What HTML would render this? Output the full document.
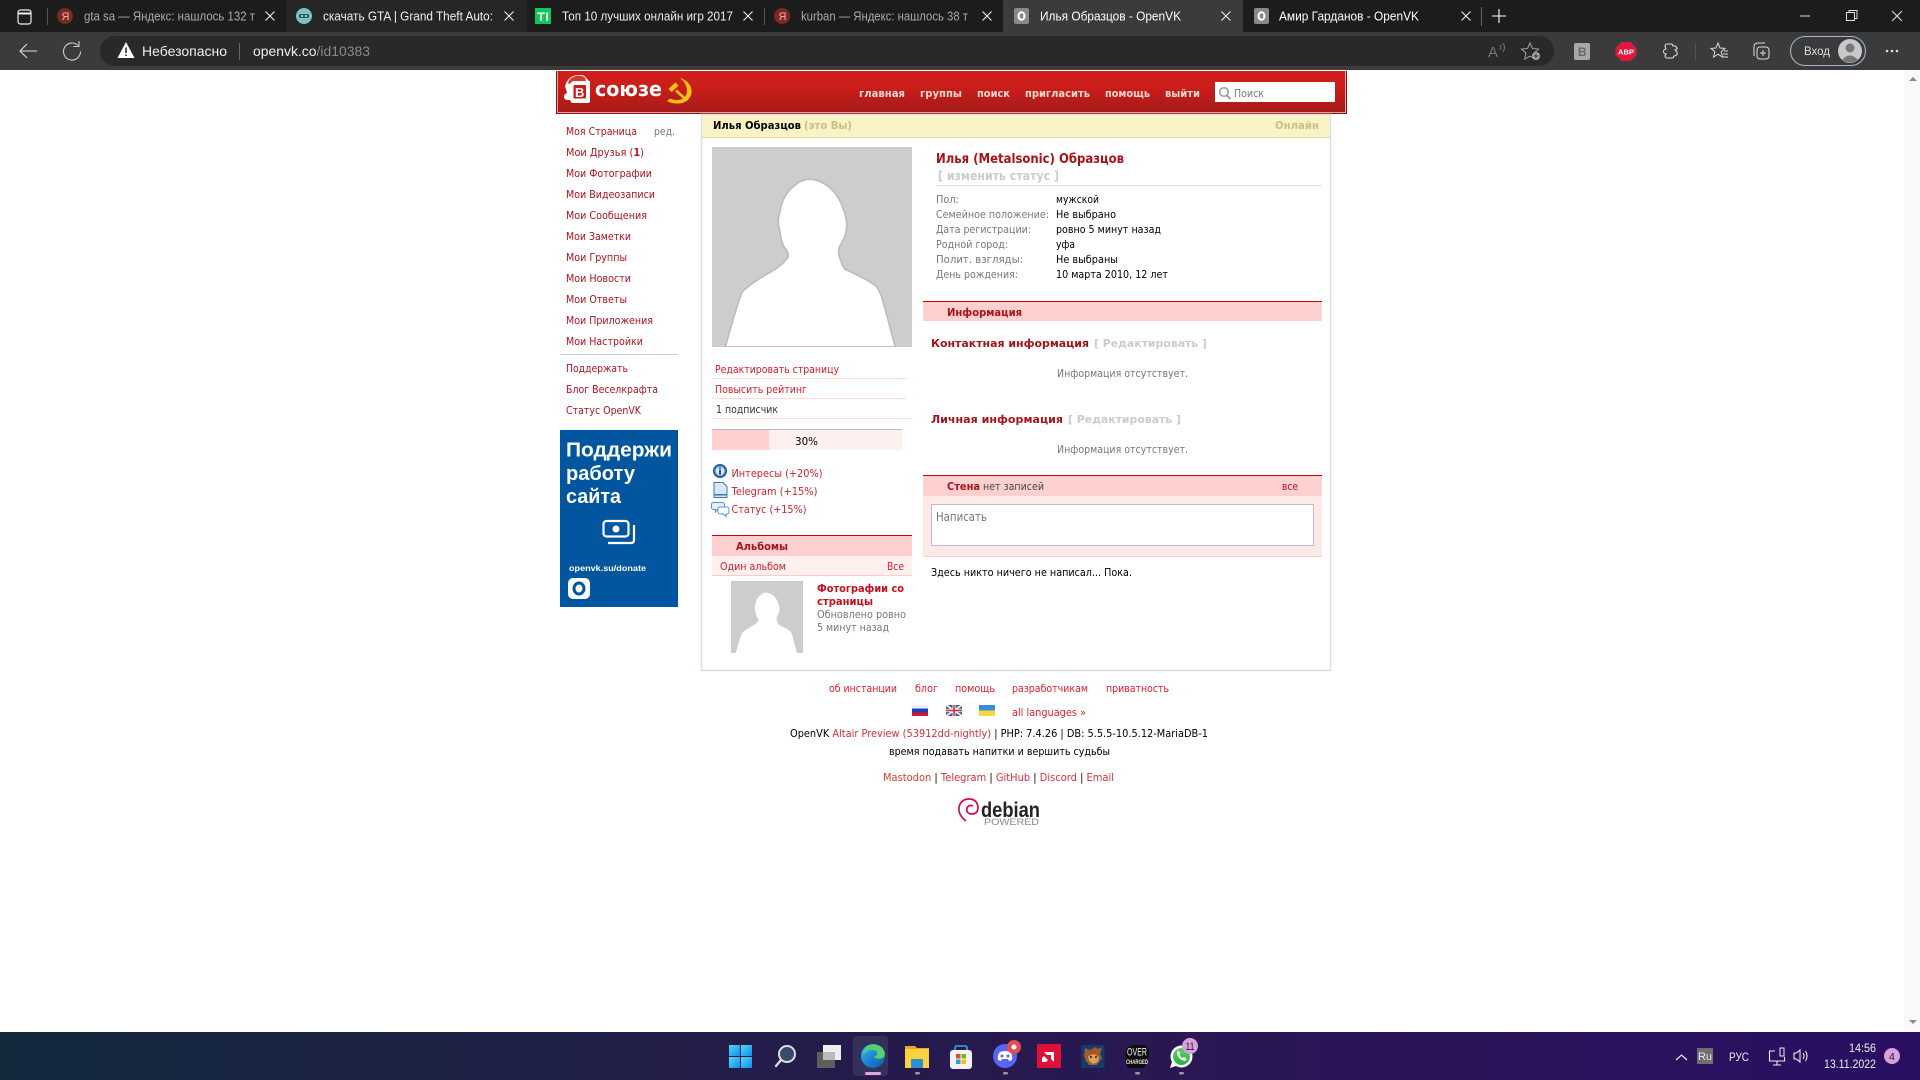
<!DOCTYPE html>
<html lang="ru"><head><meta charset="utf-8"><title>Илья Образцов - OpenVK</title>
<style>
html,body{margin:0;padding:0;width:1920px;height:1080px;overflow:hidden;background:#fff}
svg{display:block;position:absolute;left:0;top:0}
text{font-family:"DejaVu Sans",sans-serif;font-size:11px;white-space:pre}
.c text,text.c{font-family:"Liberation Sans",sans-serif}
.b{font-weight:bold}
.l{fill:#ad1420}.r{fill:#d3202c}.f{fill:#e0202c}.g{fill:#777}.k{fill:#000}.h{fill:#a8131a}.e{fill:#ccc}
.w{fill:#fff}
.t{font-size:12.5px;fill:#eee}
.n{fill:#f5d8d0;font-weight:bold}
</style></head><body>
<svg width="1920" height="1080" viewBox="0 0 1920 1080" xmlns="http://www.w3.org/2000/svg">
<defs>
<linearGradient id="hd" x1="0" y1="0" x2="0" y2="1"><stop offset="0" stop-color="#d21f1b"/><stop offset=".45" stop-color="#c91d1a"/><stop offset="1" stop-color="#a51a18"/></linearGradient>
<linearGradient id="tb" x1="0" y1="0" x2="1" y2="0"><stop offset="0" stop-color="#12293c"/><stop offset=".4" stop-color="#241c4a"/><stop offset=".7" stop-color="#2c1556"/><stop offset="1" stop-color="#2a0f63"/></linearGradient>
<linearGradient id="ed" x1="0" y1="0" x2="1" y2="1"><stop offset="0" stop-color="#35c1f1"/><stop offset=".55" stop-color="#1b7fd0"/><stop offset="1" stop-color="#0c59a4"/></linearGradient>
<linearGradient id="win" x1="0" y1="0" x2="1" y2="1"><stop offset="0" stop-color="#52d5fb"/><stop offset="1" stop-color="#0c8fe8"/></linearGradient>
<linearGradient id="wa" x1="0" y1="0" x2="0" y2="1"><stop offset="0" stop-color="#5bd066"/><stop offset="1" stop-color="#27b43e"/></linearGradient>
<path id="sil" d="M40 600C55 545 70 490 85 450C88 435 95 430 105 422C125 405 150 390 170 378C190 368 215 350 228 330C230 318 226 310 218 302C208 285 205 265 202 245C196 225 198 210 204 195C208 165 222 135 245 118C262 102 278 97 295 97C320 98 345 112 362 130C385 155 398 190 404 225C406 250 398 275 385 295C376 310 380 330 388 345C392 358 396 365 402 368C430 382 470 398 495 420C505 435 510 450 515 470L550 600Z"/>
</defs>

<!-- browser chrome -->
<rect width="1920" height="32" fill="#1c1c1c"/>
<rect x="286" y="0" width="241" height="32" fill="#262626"/>
<path d="M1003 32V0h240v32z" fill="#3b3b3b"/>
<rect y="32" width="1920" height="38" fill="#3b3b3b"/>
<rect x="100" y="36" width="1454" height="30" rx="15" fill="#292929"/>
<!-- tab strip -->
<g fill="none" stroke="#eee" stroke-width="1.2">
<rect x="18" y="10" width="13" height="14" rx="2.500"/><path d="M18 13.500h13" stroke-width="2"/>
</g>
<rect x="47" y="8" width="1" height="17" fill="#555"/>
<circle cx="65" cy="16" r="8" fill="#7c2a1e"/><text x="61.500" y="20" style="font-size:11px;fill:#e8b9b0" class="c">Я</text>
<text class="c t" x="84" y="20.500" textLength="171" lengthAdjust="spacingAndGlyphs" style="font-family:'Liberation Sans';fill:#aaa">gta sa — Яндекс: нашлось 132 т</text>
<path d="M265.500 11.500l9 9m0-9l-9 9" stroke="#eee" fill="none" stroke-width="1.100"/>
<circle cx="304" cy="16" r="8" fill="#7fc4b8"/><path d="M299 14h10v4h-10z" fill="#2d5a72"/><circle cx="302" cy="16" r="1" fill="#cde"/><circle cx="306" cy="16" r="1" fill="#cde"/>
<text class="c t" x="323" y="20.500" textLength="170" lengthAdjust="spacingAndGlyphs" style="font-family:'Liberation Sans'">скачать GTA | Grand Theft Auto:</text>
<path d="M504.500 11.500l9 9m0-9l-9 9" stroke="#eee" fill="none" stroke-width="1.100"/>
<rect x="535" y="8" width="16" height="16" fill="#12c75a"/><text x="537" y="21" style="font-size:12px;fill:#eafff0;font-family:'Liberation Sans';font-weight:bold" textLength="12" lengthAdjust="spacingAndGlyphs">TI</text>
<text class="c t" x="562" y="20.500" textLength="171" lengthAdjust="spacingAndGlyphs" style="font-family:'Liberation Sans'">Топ 10 лучших онлайн игр 2017</text>
<path d="M743.500 11.500l9 9m0-9l-9 9" stroke="#eee" fill="none" stroke-width="1.100"/>
<rect x="764" y="8" width="1" height="17" fill="#555"/>
<circle cx="782" cy="16" r="8" fill="#7c2a1e"/><text x="778.500" y="20" style="font-size:11px;fill:#e8b9b0" class="c">Я</text>
<text class="c t" x="801" y="20.500" textLength="167" lengthAdjust="spacingAndGlyphs" style="font-family:'Liberation Sans';fill:#aaa">kurban — Яндекс: нашлось 38 т</text>
<path d="M982.500 11.500l9 9m0-9l-9 9" stroke="#eee" fill="none" stroke-width="1.100"/>
<rect x="1014" y="8" width="15" height="16" rx="2" fill="#8a8a8a"/><ellipse cx="1021.500" cy="16" rx="3" ry="3.800" fill="none" stroke="#fff" stroke-width="2"/>
<text class="c t" x="1040" y="20.500" textLength="141" lengthAdjust="spacingAndGlyphs" style="font-family:'Liberation Sans';fill:#fff">Илья Образцов - OpenVK</text>
<path d="M1221.500 11.500l9 9m0-9l-9 9" stroke="#eee" fill="none" stroke-width="1.100"/>
<rect x="1254" y="8" width="15" height="16" rx="2" fill="#8a8a8a"/><ellipse cx="1261.500" cy="16" rx="3" ry="3.800" fill="none" stroke="#fff" stroke-width="2"/>
<text class="c t" x="1279" y="20.500" textLength="140" lengthAdjust="spacingAndGlyphs" style="font-family:'Liberation Sans';fill:#fff">Амир Гарданов - OpenVK</text>
<path d="M1461.500 11.500l9 9m0-9l-9 9" stroke="#eee" fill="none" stroke-width="1.100"/>
<rect x="1481" y="7" width="1" height="19" fill="#666"/>
<path d="M1492 16h14M1499 9v14" stroke="#fff" stroke-width="1.100"/>
<path d="M1800 16h10" stroke="#ddd"/>
<path d="M1846.500 12.500h8v8h-8z M1849 12.500v-2h8v8h-2" fill="none" stroke="#ddd"/>
<path d="M1892 11l10 10m0-10l-10 10" stroke="#ddd" fill="none" stroke-width="1.100"/>
<!-- toolbar -->
<path d="M37 51H20m7-7l-7 7 7 7" fill="none" stroke="#ddd" stroke-width="1.100"/>
<path d="M78 45.500a8.500 8.500 0 1 0 2.500 6M79 41v5.500h-5.500" fill="none" stroke="#ccc" stroke-width="1.100"/>
<path d="M126 42l8.500 16h-17z" fill="#fff"/><path d="M126 47.500v5.500M126 54.500v1.500" stroke="#222" stroke-width="1.500"/>
<text class="c" x="142" y="56" style="font-family:'Liberation Sans';font-size:13.500px;fill:#eee" textLength="85" lengthAdjust="spacingAndGlyphs">Небезопасно</text>
<rect x="239" y="43" width="1" height="17" fill="#666"/>
<text class="c" x="253" y="56" style="font-family:'Liberation Sans';font-size:13.500px;fill:#eee" textLength="117" lengthAdjust="spacingAndGlyphs">openvk.co<tspan fill="#8a8a8a">/id10383</tspan></text>
<text class="c" x="1488" y="57" style="font-family:'Liberation Sans';font-size:15px;fill:#777">A</text>
<path d="M1500 45q2 2 0 5M1503 43q3 4 0 9" stroke="#777" fill="none"/>
<path d="M1530 43l2.500 5.500 6 .6-4.500 4 1.300 6-5.300-3-5.300 3 1.300-6-4.500-4 6-.6z" fill="none" stroke="#999" stroke-width="1.100"/><circle cx="1536" cy="56" r="4" fill="#aaa"/><path d="M1533.500 56h5M1536 53.500v5" stroke="#333"/>
<rect x="1574" y="43" width="16" height="17" rx="2" fill="#a8a8a8"/><text x="1578" y="56" style="font-size:12px;fill:#666;font-weight:bold" class="c">B</text>
<path d="M1621.500 42h9l6 6v7l-6 6h-9l-6-6v-7z" fill="#e0183c"/><text x="1618" y="54.500" style="font-family:'Liberation Sans';font-size:7px;font-weight:bold;fill:#fff" textLength="16" lengthAdjust="spacingAndGlyphs">ABP</text>
<path d="M1667 44h5l1 2a3 3 0 0 1 4 3l-2 1 2 2a3 3 0 0 1-3 4l-1 2h-6a2 2 0 0 1-2-2l1-2a2.500 2.500 0 0 1 0-5l-1-3a2 2 0 0 1 2-2z" fill="none" stroke="#ddd" stroke-width="1.100"/>
<rect x="1695" y="43" width="1" height="17" fill="#555"/>
<path d="M1718 43l2 5 5 .4-3.800 3.400 1.300 5.200-4.500-2.800-4.500 2.800 1.300-5.200-3.800-3.400 5-.4z" fill="none" stroke="#ddd" stroke-width="1"/><path d="M1724 51h4M1723 54h5M1723 57h5" stroke="#ddd"/>
<rect x="1757" y="47" width="12" height="12" rx="3" fill="none" stroke="#ddd" stroke-width="1"/><path d="M1754 56V47q0-4 4-4h7M1763 50v6M1760 53h6" stroke="#ddd" fill="none" stroke-width="1"/>
<rect x="1790.500" y="36.500" width="75" height="29" rx="14.500" fill="none" stroke="#9fb7d0" stroke-width="1.100"/>
<text class="c" x="1804" y="55" style="font-family:'Liberation Sans';font-size:11.500px;fill:#ddd" textLength="26" lengthAdjust="spacingAndGlyphs">Вход</text>
<circle cx="1850" cy="51" r="12" fill="#c8c8c8"/><circle cx="1850" cy="48" r="4.500" fill="#777"/><path d="M1842 60q8-9 16 0q-8 5-16 0z" fill="#777"/>
<circle cx="1887" cy="51" r="1.300" fill="#ddd"/><circle cx="1892" cy="51" r="1.300" fill="#ddd"/><circle cx="1897" cy="51" r="1.300" fill="#ddd"/>

<!-- page -->
<rect y="70" width="1920" height="962" fill="#fff"/>
<rect x="1904" y="70" width="16" height="962" fill="#f9f9f9"/>
<path d="M1909 81l4-4 4 4z" fill="#8a8a8a"/><path d="M1909 1020l4 4 4-4z" fill="#8a8a8a"/>
<!-- header -->
<rect x="556" y="71" width="791" height="43" fill="#8c1313"/>
<rect x="557" y="71" width="789" height="42" fill="#e4a0a0"/>
<rect x="558" y="71" width="787" height="41" fill="url(#hd)"/>
<!-- logo -->
<path d="M565 86q3-9 10-10.500q8-1.500 10 1l2 2.500q2 1 2 3v-1h1v20q0 2-2 2h-15q-2 0-3-3h-3q-3-.5-3-3.500q0-2 2-3l1-1z" fill="#fff"/>
<path d="M568 83q2-6 8-7q6-1 9 1.500l1 3.500h-12q-2 0-3 2l-2 1z" fill="#d53a30"/>
<rect x="573.500" y="85" width="12.500" height="13.500" rx="1" fill="#c91d1a"/>
<text x="575" y="97" style="font-family:'Liberation Sans';font-size:13px;font-weight:bold;fill:#fff">В</text>
<text x="595" y="96" style="font-size:20px;font-weight:bold;fill:#fff" textLength="67" lengthAdjust="spacingAndGlyphs">союзе</text>
<path d="M680 77.500Q693 83 691.500 94Q688 104 677 103.500Q671 103.500 667 101L670 98.500Q674 100.500 678 100Q686.500 99 687 91Q687 84 680 77.500z" fill="#f2c115"/>
<path d="M676 90.500L687 100.500" stroke="#f2c115" stroke-width="2.600" fill="none"/><path d="M670 90.500L677 84" stroke="#f2c115" stroke-width="4.500" fill="none"/>
<text class="n" x="859" y="97" textLength="46" lengthAdjust="spacingAndGlyphs">главная</text>
<text class="n" x="920" y="97" textLength="42" lengthAdjust="spacingAndGlyphs">группы</text>
<text class="n" x="977" y="97" textLength="33" lengthAdjust="spacingAndGlyphs">поиск</text>
<text class="n" x="1025" y="97" textLength="65" lengthAdjust="spacingAndGlyphs">пригласить</text>
<text class="n" x="1105" y="97" textLength="45" lengthAdjust="spacingAndGlyphs">помощь</text>
<text class="n" x="1165" y="97" textLength="35" lengthAdjust="spacingAndGlyphs">выйти</text>
<rect x="1215" y="82" width="120" height="20" fill="#fff"/>
<circle cx="1224" cy="92" r="4.300" fill="none" stroke="#999" stroke-width="1.500"/><path d="M1227 95.500l3.500 3.500" stroke="#999" stroke-width="1.800"/>
<text class="g" x="1234" y="97" textLength="30" lengthAdjust="spacingAndGlyphs">Поиск</text>

<!-- left menu -->
<text class="l" x="566" y="135" textLength="71" lengthAdjust="spacingAndGlyphs">Моя Страница</text>
<text class="g" x="654" y="135" textLength="21" lengthAdjust="spacingAndGlyphs">ред.</text>
<text class="l" x="566" y="156" textLength="78" lengthAdjust="spacingAndGlyphs">Мои Друзья (<tspan class="b">1</tspan>)</text>
<text class="l" x="566" y="177" textLength="86" lengthAdjust="spacingAndGlyphs">Мои Фотографии</text>
<text class="l" x="566" y="198" textLength="89" lengthAdjust="spacingAndGlyphs">Мои Видеозаписи</text>
<text class="l" x="566" y="219" textLength="81" lengthAdjust="spacingAndGlyphs">Мои Сообщения</text>
<text class="l" x="566" y="240" textLength="65" lengthAdjust="spacingAndGlyphs">Мои Заметки</text>
<text class="l" x="566" y="261" textLength="61" lengthAdjust="spacingAndGlyphs">Мои Группы</text>
<text class="l" x="566" y="282" textLength="65" lengthAdjust="spacingAndGlyphs">Мои Новости</text>
<text class="l" x="566" y="303" textLength="61" lengthAdjust="spacingAndGlyphs">Мои Ответы</text>
<text class="l" x="566" y="324" textLength="87" lengthAdjust="spacingAndGlyphs">Мои Приложения</text>
<text class="l" x="566" y="345" textLength="77" lengthAdjust="spacingAndGlyphs">Мои Настройки</text>
<rect x="560" y="354" width="118" height="1" fill="#ccc"/>
<text class="l" x="566" y="372" textLength="62" lengthAdjust="spacingAndGlyphs">Поддержать</text>
<text class="l" x="566" y="393" textLength="92" lengthAdjust="spacingAndGlyphs">Блог Веселкрафта</text>
<text class="l" x="566" y="414" textLength="75" lengthAdjust="spacingAndGlyphs">Статус OpenVK</text>
<!-- ad -->
<rect x="560" y="430" width="118" height="177" fill="#01569f"/>
<text x="566" y="456.500" style="font-family:'Liberation Sans';font-size:20px;font-weight:bold;fill:#fff" textLength="106" lengthAdjust="spacingAndGlyphs">Поддержи</text>
<text x="566" y="480" style="font-family:'Liberation Sans';font-size:20px;font-weight:bold;fill:#fff" textLength="69" lengthAdjust="spacingAndGlyphs">работу</text>
<text x="566" y="503" style="font-family:'Liberation Sans';font-size:20px;font-weight:bold;fill:#fff" textLength="55" lengthAdjust="spacingAndGlyphs">сайта</text>
<text x="569" y="571" style="font-family:'Liberation Sans';font-size:8.500px;font-weight:bold;fill:#fff" textLength="77" lengthAdjust="spacingAndGlyphs">openvk.su/donate</text>
<rect x="603.500" y="521" width="25" height="15.500" rx="3" fill="none" stroke="#fff" stroke-width="2.200"/><circle cx="616" cy="529" r="3.500" fill="#fff"/>
<path d="M634 525v15q0 3-3 3h-23" fill="none" stroke="#fff" stroke-width="2.200"/>
<rect x="568" y="578" width="22" height="21" rx="5" fill="#fff"/><ellipse cx="579" cy="588.500" rx="5" ry="5.500" fill="none" stroke="#01569f" stroke-width="3"/>

<!-- main panel -->
<rect x="701.500" y="114.500" width="629" height="556" fill="#fff" stroke="#d6dee7" stroke-width="1.500"/>
<rect x="702" y="115" width="628" height="22" fill="#fbf3c6"/>
<rect x="702" y="137" width="628" height="1" fill="#e2d8a2"/>
<text class="b k" x="713" y="129" textLength="88" lengthAdjust="spacingAndGlyphs">Илья Образцов</text>
<text class="b" fill="#cbbf85" x="804" y="129" textLength="48" lengthAdjust="spacingAndGlyphs">(это Вы)</text>
<text class="b" fill="#cbbf85" x="1275" y="129" textLength="44" lengthAdjust="spacingAndGlyphs">Онлайн</text>

<!-- avatar -->
<rect x="712" y="147" width="200" height="200" fill="#cdcdcd"/>
<use href="#sil" transform="translate(712 147) scale(.3333)" fill="#fff" stroke="#bcbcbc" stroke-width="5"/>
<rect x="712" y="347" width="200" height="2" fill="#fff"/>

<text class="r" x="715" y="373" textLength="124" lengthAdjust="spacingAndGlyphs">Редактировать страницу</text>
<rect x="712" y="378" width="194" height="1" fill="#fdd"/>
<text class="r" x="715" y="393" textLength="92" lengthAdjust="spacingAndGlyphs">Повысить рейтинг</text>
<rect x="712" y="398" width="194" height="1" fill="#fdd"/>
<text fill="#333" x="716" y="413" textLength="62" lengthAdjust="spacingAndGlyphs">1 подписчик</text>
<rect x="712" y="418" width="200" height="1" fill="#fdd"/>
<rect x="712" y="429" width="190" height="21" fill="#fff0f0"/>
<rect x="712" y="429" width="57" height="21" fill="#ffd0d0"/>
<rect x="712" y="429" width="190" height="1" fill="#bbb"/>
<text class="k" x="795" y="445" textLength="23" lengthAdjust="spacingAndGlyphs">30%</text>

<circle cx="720" cy="471" r="6.500" fill="#3a78c0" stroke="#1d4f92"/><circle cx="720" cy="471" r="4.500" fill="#dbe8f6"/><rect x="719" y="470" width="2" height="4.500" fill="#1d4f92"/><rect x="719" y="467.500" width="2" height="1.800" fill="#1d4f92"/>
<path d="M714 482.500h9l4 4v11h-13z" fill="#d8e8f8" stroke="#3a78c0"/><rect x="714" y="494" width="13" height="1.500" fill="#3a78c0"/>
<path d="M713.500 502.500h9a2 2 0 0 1 2 2v3a2 2 0 0 1-2 2h-5l-2 2.500v-2.500h-2a2 2 0 0 1-2-2v-3a2 2 0 0 1 2-2z" fill="#e6f0fa" stroke="#5b8fca"/>
<path d="M720 507h7a2 2 0 0 1 2 2v3a2 2 0 0 1-2 2h-1v2.500l-2.500-2.500h-3.500a2 2 0 0 1-2-2v-3a2 2 0 0 1 2-2z" fill="#fff" stroke="#5b8fca"/>
<text class="r" x="731.500" y="477" textLength="91" lengthAdjust="spacingAndGlyphs">Интересы (+20%)</text>
<text class="r" x="731.500" y="495" textLength="86" lengthAdjust="spacingAndGlyphs">Telegram (+15%)</text>
<text class="r" x="731.500" y="513" textLength="75" lengthAdjust="spacingAndGlyphs">Статус (+15%)</text>

<rect x="712" y="535" width="200" height="21" fill="#ffd0d0"/>
<rect x="712" y="535" width="200" height="1" fill="#c00"/>
<text class="b h" x="736" y="550" textLength="52" lengthAdjust="spacingAndGlyphs">Альбомы</text>
<rect x="712" y="556" width="200" height="19" fill="#fff0f0"/>
<rect x="712" y="575" width="200" height="1" fill="#fcc"/>
<text class="r" x="720" y="570" textLength="66" lengthAdjust="spacingAndGlyphs">Один альбом</text>
<text class="r" x="887" y="570" textLength="17" lengthAdjust="spacingAndGlyphs">Все</text>
<rect x="731" y="581" width="72" height="72" fill="#cdcdcd"/>
<use href="#sil" transform="translate(731 581) scale(.12)" fill="#fff"/>
<text class="b" style="fill:#c40f1a" x="817" y="592" textLength="87" lengthAdjust="spacingAndGlyphs">Фотографии со</text>
<text class="b" style="fill:#c40f1a" x="817" y="605" textLength="56" lengthAdjust="spacingAndGlyphs">страницы</text>
<text class="g" x="817" y="618" textLength="89" lengthAdjust="spacingAndGlyphs">Обновлено ровно</text>
<text class="g" x="817" y="631" textLength="72" lengthAdjust="spacingAndGlyphs">5 минут назад</text>

<!-- right col -->
<text class="b h" style="font-size:13px" x="936" y="163" textLength="188" lengthAdjust="spacingAndGlyphs">Илья (Metalsonic) Образцов</text>
<text class="b e" style="font-size:12px" x="938" y="180" textLength="121" lengthAdjust="spacingAndGlyphs">[ изменить статус ]</text>
<rect x="936" y="185" width="386" height="1" fill="#dde"/>
<text class="g" x="936" y="203" textLength="23" lengthAdjust="spacingAndGlyphs">Пол:</text>
<text class="g" x="936" y="218" textLength="113" lengthAdjust="spacingAndGlyphs">Семейное положение:</text>
<text class="g" x="936" y="233" textLength="95" lengthAdjust="spacingAndGlyphs">Дата регистрации:</text>
<text class="g" x="936" y="248" textLength="72" lengthAdjust="spacingAndGlyphs">Родной город:</text>
<text class="g" x="936" y="263" textLength="87" lengthAdjust="spacingAndGlyphs">Полит. взгляды:</text>
<text class="g" x="936" y="278" textLength="82" lengthAdjust="spacingAndGlyphs">День рождения:</text>
<text class="k" x="1056" y="203" textLength="43" lengthAdjust="spacingAndGlyphs">мужской</text>
<text class="k" x="1056" y="218" textLength="60" lengthAdjust="spacingAndGlyphs">Не выбрано</text>
<text class="k" x="1056" y="233" textLength="105" lengthAdjust="spacingAndGlyphs">ровно 5 минут назад</text>
<text class="k" x="1056" y="248" textLength="19" lengthAdjust="spacingAndGlyphs">уфа</text>
<text class="k" x="1056" y="263" textLength="62" lengthAdjust="spacingAndGlyphs">Не выбраны</text>
<text class="k" x="1056" y="278" textLength="112" lengthAdjust="spacingAndGlyphs">10 марта 2010, 12 лет</text>

<rect x="923" y="301" width="399" height="20" fill="#ffd0d0"/>
<rect x="923" y="301" width="399" height="1" fill="#c00"/>
<text class="b h" x="947" y="316" textLength="75" lengthAdjust="spacingAndGlyphs">Информация</text>
<text class="b h" x="931" y="347" textLength="158" lengthAdjust="spacingAndGlyphs">Контактная информация</text>
<text class="b e" x="1094" y="347" textLength="113" lengthAdjust="spacingAndGlyphs">[ Редактировать ]</text>
<text class="g" x="1057" y="377" textLength="131" lengthAdjust="spacingAndGlyphs">Информация отсутствует.</text>
<text class="b h" x="931" y="423" textLength="132" lengthAdjust="spacingAndGlyphs">Личная информация</text>
<text class="b e" x="1068" y="423" textLength="113" lengthAdjust="spacingAndGlyphs">[ Редактировать ]</text>
<text class="g" x="1057" y="453" textLength="131" lengthAdjust="spacingAndGlyphs">Информация отсутствует.</text>

<rect x="923" y="475" width="399" height="21" fill="#ffd0d0"/>
<rect x="923" y="475" width="399" height="1" fill="#c00"/>
<text class="b h" x="947" y="490" textLength="33" lengthAdjust="spacingAndGlyphs">Стена</text>
<text fill="#444" x="983" y="490" textLength="61" lengthAdjust="spacingAndGlyphs">нет записей</text>
<text style="fill:#c40f1a" x="1282" y="490" textLength="16" lengthAdjust="spacingAndGlyphs">все</text>
<rect x="923" y="496" width="399" height="60" fill="#ffe8e8"/>
<rect x="923" y="556" width="399" height="1" fill="#fcc"/>
<rect x="931.500" y="504.500" width="382" height="41" fill="#fff" stroke="#b8c0cc"/>
<text class="g" style="font-size:12px" x="936" y="521" textLength="51" lengthAdjust="spacingAndGlyphs">Написать</text>
<text class="k" x="931" y="576" textLength="201" lengthAdjust="spacingAndGlyphs">Здесь никто ничего не написал... Пока.</text>

<!-- footer -->
<text class="f" x="829" y="692" textLength="68" lengthAdjust="spacingAndGlyphs">об инстанции</text>
<text class="f" x="915" y="692" textLength="23" lengthAdjust="spacingAndGlyphs">блог</text>
<text class="f" x="955" y="692" textLength="40" lengthAdjust="spacingAndGlyphs">помощь</text>
<text class="f" x="1012" y="692" textLength="76" lengthAdjust="spacingAndGlyphs">разработчикам</text>
<text class="f" x="1106" y="692" textLength="63" lengthAdjust="spacingAndGlyphs">приватность</text>
<rect x="912" y="705" width="16" height="11" fill="#eee"/><rect x="912" y="708.500" width="16" height="4" fill="#1a3fc0"/><rect x="912" y="712.500" width="16" height="3.500" fill="#d8182a"/>
<rect x="946" y="705" width="16" height="11" fill="#3f5a9a"/><path d="M946 705l16 11M962 705l-16 11" stroke="#eee" stroke-width="1.800"/><path d="M954 705v11M946 710.500h16" stroke="#eee" stroke-width="3.200"/><path d="M954 705v11M946 710.500h16" stroke="#d8283a" stroke-width="1.500"/>
<rect x="979" y="705" width="16" height="5.500" fill="#3a8ae0"/><rect x="979" y="710.500" width="16" height="5.500" fill="#f5d83a"/>
<text class="f" x="1012" y="716" textLength="74" lengthAdjust="spacingAndGlyphs">all languages »</text>
<text class="k" x="790" y="737" textLength="418" lengthAdjust="spacingAndGlyphs">OpenVK <tspan fill="#d8303a">Altair Preview (53912dd-nightly)</tspan> | PHP: 7.4.26 | DB: 5.5.5-10.5.12-MariaDB-1</text>
<text class="k" x="889" y="755" textLength="221" lengthAdjust="spacingAndGlyphs">время подавать напитки и вершить судьбы</text>
<text class="k" x="883" y="781" textLength="231" lengthAdjust="spacingAndGlyphs"><tspan fill="#d8402a">Mastodon</tspan> | <tspan fill="#d8303a">Telegram</tspan> | <tspan fill="#d8303a">GitHub</tspan> | <tspan fill="#d8303a">Discord</tspan> | <tspan fill="#d8303a">Email</tspan></text>
<path d="M966 821Q958 815 959 807Q961 799 969 799Q977 799 978 807Q978 814 972 814Q966 814 967 808Q969 804 973 806" fill="none" stroke="#d70a53" stroke-width="1.700"/>
<text x="981" y="817" style="font-family:'Liberation Sans';font-size:21px;font-weight:bold;fill:#222" textLength="59" lengthAdjust="spacingAndGlyphs">debian</text>
<text x="984" y="825" style="font-family:'Liberation Sans';font-size:9px;fill:#888" textLength="55" lengthAdjust="spacingAndGlyphs">POWERED</text>

<!-- taskbar -->
<rect y="1032" width="1920" height="48" fill="url(#tb)"/>
<g fill="url(#win)"><rect x="729" y="1045" width="11" height="11"/><rect x="741" y="1045" width="11" height="11"/><rect x="729" y="1057" width="11" height="11"/><rect x="741" y="1057" width="11" height="11"/></g>
<circle cx="787" cy="1054" r="8" fill="#3a4a6e" stroke="#ddd" stroke-width="2"/><path d="M781 1060l-5 6" stroke="#ddd" stroke-width="2.400" stroke-linecap="round"/>
<rect x="823" y="1045" width="18" height="15" fill="#eee"/><rect x="817" y="1052" width="18" height="16" fill="#5e5e5e"/><rect x="823" y="1052" width="12" height="8" fill="#bbb"/>
<rect x="853" y="1036" width="35" height="40" rx="4" fill="#33305a"/>
<circle cx="873" cy="1056" r="12" fill="url(#ed)"/><path d="M863 1054q2-9 10-9.500q10 0 12 9q0 4-4 5q-5 1-7-2q4-1 3-5q-6-4-14 2.500z" fill="#55d077"/>
<rect x="865" y="1072" width="16" height="3" rx="1.500" fill="#e0a6e0"/>
<path d="M905 1046h10l2 2h12v20h-24z" fill="#e7ab23"/><rect x="905" y="1049" width="24" height="19" fill="#fdd03f"/><rect x="911" y="1059" width="12" height="9" rx="1" fill="#2c8fd0"/>
<rect x="915" y="1072" width="5" height="2.500" rx="1.200" fill="#999"/>
<rect x="950" y="1050" width="22" height="19" rx="3" fill="#f3f3f3"/><path d="M955 1050v-2q0-2 2-2h8q2 0 2 2v2" fill="none" stroke="#33a9e0" stroke-width="1.600"/>
<rect x="956" y="1054" width="4.500" height="4.500" fill="#e64a2e"/><rect x="961.500" y="1054" width="4.500" height="4.500" fill="#71b821"/><rect x="956" y="1059.500" width="4.500" height="4.500" fill="#1ea3e8"/><rect x="961.500" y="1059.500" width="4.500" height="4.500" fill="#fdb900"/>
<circle cx="1005" cy="1056" r="12" fill="#5865f2"/><path d="M998 1060q-1-5 2-8q5-2 10 0q3 3 2 8l-3 1-1-2h-6l-1 2z" fill="#fff"/><circle cx="1002" cy="1056" r="1.500" fill="#5865f2"/><circle cx="1008" cy="1056" r="1.500" fill="#5865f2"/>
<circle cx="1014" cy="1047" r="7" fill="#e05050"/><circle cx="1014" cy="1047" r="2.500" fill="#fff"/>
<rect x="1003" y="1072" width="5" height="2.500" rx="1.200" fill="#999"/>
<rect x="1037" y="1044" width="24" height="24" fill="#e0103a"/><path d="M1044 1052h10v10l-3-3v-4h-4zM1044 1056l4 4-2 2h-4v-4z" fill="#fff"/>
<rect x="1081.500" y="1045" width="23" height="23" fill="#123c6e"/><path d="M1084 1056l1-8 5 2 5-3 3 2 4-2-2 7 2 4-5 7h-8l-3-4z" fill="#a5562a"/><path d="M1088 1056l6-2 5 3-1 5-5 2-4-3z" fill="#d9a060"/><circle cx="1091" cy="1057" r="1" fill="#123"/><circle cx="1096" cy="1057" r="1" fill="#123"/>
<path d="M1126 1050q2-5 10-5h8q5 2 5 8q0 5-3 7q1 6-3 8h-14q-4-2-3-8q-2-4 0-10z" fill="#0d0d0d"/>
<text x="1127" y="1055.500" style="font-family:'Liberation Sans';font-size:11px;fill:#eee" textLength="20" lengthAdjust="spacingAndGlyphs">OVER</text>
<text x="1126" y="1064" style="font-family:'Liberation Sans';font-size:6.500px;font-weight:bold;fill:#eee" textLength="22" lengthAdjust="spacingAndGlyphs">CHARGED</text>
<rect x="1135" y="1072" width="5" height="2.500" rx="1.200" fill="#999"/>
<path d="M1170 1068l2-6a11 11 0 1 1 4 4z" fill="#fff"/><circle cx="1181.500" cy="1056.500" r="8.500" fill="url(#wa)"/><path d="M1177 1052q0 7 8 9l2-2-3-2-1.500 1q-2-1-3-3l1-1.500-2-3z" fill="#fff"/>
<circle cx="1190" cy="1046" r="8" fill="#d8a0dc"/><text x="1185.500" y="1050" style="font-family:'Liberation Sans';font-size:11px;fill:#222" textLength="9" lengthAdjust="spacingAndGlyphs">11</text>
<rect x="1179" y="1072" width="5" height="2.500" rx="1.200" fill="#999"/>
<!-- tray -->
<path d="M1676 1060l5.500-5 5.500 5" fill="none" stroke="#eee" stroke-width="1.200"/>
<rect x="1697" y="1048" width="16" height="16" fill="#6e6e6e"/><text x="1698" y="1060" style="font-family:'Liberation Sans';font-size:11px;fill:#e8e8e8" textLength="14" lengthAdjust="spacingAndGlyphs">Ru</text>
<text x="1729" y="1061" style="font-family:'Liberation Sans';font-size:11.500px;fill:#eee" textLength="20" lengthAdjust="spacingAndGlyphs">РУС</text>
<path d="M1775 1051h-5.500v10h15v-4M1773 1065h8M1777 1061v4" fill="none" stroke="#eee" stroke-width="1.100"/><rect x="1780" y="1048" width="4" height="8" fill="none" stroke="#eee"/>
<path d="M1794 1053h2.500l3.500-3v12l-3.500-3H1794zM1803 1053q2 3 0 6M1805.500 1051q3 5 0 10" fill="none" stroke="#eee" stroke-width="1.100"/>
<text x="1849" y="1052" style="font-family:'Liberation Sans';font-size:11.500px;fill:#eee" textLength="27" lengthAdjust="spacingAndGlyphs">14:56</text>
<text x="1824" y="1068" style="font-family:'Liberation Sans';font-size:11.500px;fill:#eee" textLength="52" lengthAdjust="spacingAndGlyphs">13.11.2022</text>
<circle cx="1892" cy="1056" r="8" fill="#d8a0dc"/><text x="1889" y="1060" style="font-family:'Liberation Sans';font-size:10.500px;fill:#222">4</text>
</svg>
</body></html>
